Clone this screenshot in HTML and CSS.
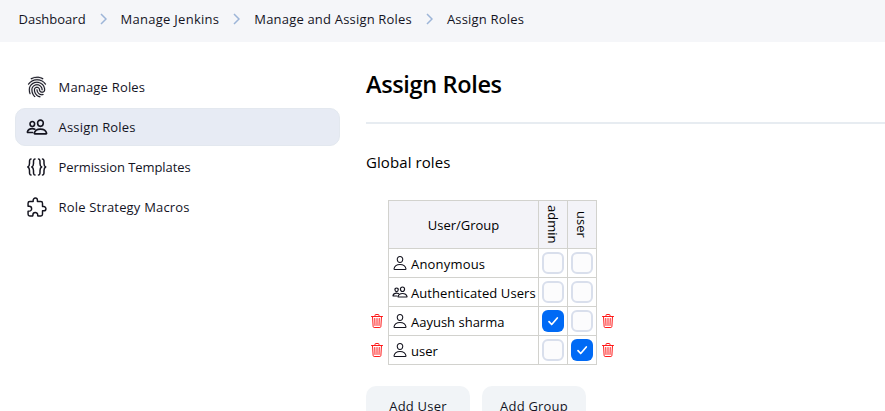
FILE: index.html
```html
<!DOCTYPE html>
<html lang="en">
<head>
<meta charset="utf-8">
<title>Assign Roles</title>
<link rel="stylesheet" href="styles.css">
</head>
<body>
<svg class="sprite" aria-hidden="true">
  <symbol id="chevron" viewBox="0 0 7 12"><path d="M1 1l5 5-5 5" fill="none" stroke="currentColor" stroke-width="1.5"/></symbol>
  <symbol id="fingerprint" viewBox="0 0 512 512"><path fill="currentColor" stroke="currentColor" stroke-width="5" d="M390.42 75.28a10.45 10.45 0 01-5.32-1.44C340.72 50.08 302.35 40 256.35 40c-45.77 0-89.23 11.28-128.76 33.84C122 77 115.11 74.8 111.87 69a12.4 12.4 0 014.63-16.32A281.81 281.81 0 01256.35 16c49.23 0 92.23 11.28 139.39 36.48a12 12 0 014.85 16.08 11.3 11.3 0 01-10.17 6.72zm-330.79 126a11.73 11.73 0 01-6.7-2.16 12.26 12.26 0 01-2.78-16.8c22.89-33.6 52-60 86.69-78.48 72.58-38.84 165.51-39.12 238.32-.24 34.68 18.48 63.8 44.64 86.69 78a12.29 12.29 0 01-2.78 16.8 11.26 11.26 0 01-16.18-2.88c-20.8-30.24-47.15-54-78.36-70.56-66.34-35.28-151.18-35.28-217.29.24-31.44 16.8-57.79 40.8-78.59 71.04a10 10 0 01-9.02 5.04zM204.1 491a10.66 10.66 0 01-8.09-3.6C175.9 466.48 165 453 149.55 424c-16-29.52-24.27-65.52-24.27-104.16 0-71.28 58.71-129.36 130.84-129.36S387 248.56 387 319.84a11.56 11.56 0 11-23.11 0c0-58.08-48.32-105.36-107.72-105.36S148.4 261.76 148.4 319.84c0 34.56 7.39 66.48 21.49 92.4 14.8 27.6 25 39.36 42.77 58.08a12.67 12.67 0 010 17 12.44 12.44 0 01-8.56 3.68zm165.75-44.4c-27.51 0-51.78-7.2-71.66-21.36a129.1 129.1 0 01-55-105.36 11.57 11.57 0 1123.12 0 104.28 104.28 0 0044.84 85.44c16.41 11.52 35.6 17 58.72 17a147.41 147.41 0 0024-2.4c6.24-1.2 12.25 3.12 13.4 9.84a11.92 11.92 0 01-9.47 13.92 152.28 152.28 0 01-27.95 2.92zM323.38 496a13 13 0 01-3-.48c-36.76-10.56-60.8-24.72-86-50.4-32.37-33.36-50.16-77.76-50.16-125.28 0-38.88 31.9-70.56 71.19-70.56s71.2 31.68 71.2 70.56c0 25.68 21.5 46.56 48.08 46.56s48.08-20.88 48.08-46.56c0-90.48-75.13-163.92-167.59-163.92-65.65 0-125.75 37.92-152.79 96.72-9 19.44-13.64 42.24-13.64 67.2 0 18.72 1.61 48.24 15.48 86.64 2.32 6.24-.69 13.2-6.7 15.36a11.34 11.34 0 01-14.79-7 276.39 276.39 0 01-16.88-95c0-28.8 5.32-55 15.72-77.76 30.75-67 98.94-110.4 173.6-110.4 105.18 0 190.71 84.24 190.71 187.92 0 38.88-32 70.56-71.2 70.56s-71.2-31.68-71.2-70.56C303.5 294.16 282 273.28 255.42 273.28S207.34 294.16 207.34 319.84c0 41.04 15.48 79.44 43.69 108.48 22.2 22.8 43.45 35.28 76.52 44.88 6.24 1.68 9.71 8.4 8.09 14.64A11.8 11.8 0 01323.38 496z"/></symbol>
  <symbol id="people" viewBox="0 0 512 512"><g fill="none" stroke="currentColor" stroke-linecap="round" stroke-linejoin="round" stroke-width="38"><path d="M402 168c-2.93 40.67-33.1 72-66 72s-63.12-31.32-66-72c-3-42.31 26.37-72 66-72s69 30.46 66 72z"/><path d="M336 304c-65.17 0-127.84 32.37-143.54 95.41-2.08 8.34 3.15 16.59 11.72 16.59h263.65c8.57 0 13.77-8.25 11.72-16.59C463.85 335.36 401.18 304 336 304z"/><path d="M200 185.94c-2.34 32.48-26.72 58.06-53 58.06s-50.7-25.57-53-58.06C91.61 152.15 115.34 128 147 128s55.39 24.77 53 57.94zM206 306c-18.05-8.27-37.93-11.45-59-11.45-52 0-102.1 25.85-114.65 76.2-1.65 6.66 2.53 13.25 9.37 13.25H154"/></g></symbol>
  <symbol id="braces" viewBox="0 0 22 22"><path fill="none" stroke="currentColor" stroke-width="1.5" stroke-linecap="round" stroke-linejoin="round" d="M5 3C3.300 3 3.500 5 3.500 7.500S3.200 10.500 1.800 11C3.200 11.500 3.500 12 3.500 14.500S3.300 19 5 19M9 3C7.300 3 7.500 5 7.500 7.500S7.200 10.500 5.800 11C7.200 11.500 7.500 12 7.500 14.500S7.300 19 9 19M12.500 3C14.200 3 14 5 14 7.500S14.300 10.500 15.700 11C14.300 11.500 14 12 14 14.500S14.200 19 12.500 19M16.500 3C18.200 3 18 5 18 7.500S18.300 10.500 19.700 11C18.300 11.500 18 12 18 14.500S18.200 19 16.500 19"/></symbol>
  <symbol id="puzzle" viewBox="0 0 512 512"><path fill="none" stroke="currentColor" stroke-linejoin="round" stroke-width="34" d="M413.66 246.1H386a2 2 0 01-2-2v-77.24A38.86 38.86 0 00345.14 128H267.9a2 2 0 01-2-2V98.34c0-27.14-21.5-49.86-48.64-50.33a49.53 49.53 0 00-50.4 49.51V126a2 2 0 01-2 2H87.62A39.74 39.74 0 0048 167.62V238a2 2 0 002 2h26.91c29.37 0 53.68 25.48 54.09 54.85.42 29.87-23.51 57.15-53.29 57.15H50a2 2 0 00-2 2v70.38A39.74 39.74 0 0087.62 464H158a2 2 0 002-2v-20.93c0-30.28 24.75-56.35 55-57.06 30.1-.7 57 20.31 57 50.28V462a2 2 0 002 2h71.14A38.86 38.86 0 00384 425.14v-78a2 2 0 012-2h28.48c27.63 0 49.52-22.67 49.52-50.4s-23.2-48.64-50.34-48.64z"/></symbol>
  <symbol id="person" viewBox="0 0 512 512"><path fill="none" stroke="currentColor" stroke-linejoin="round" stroke-width="34" d="M344 144c-3.92 52.87-44 96-88 96s-84.15-43.12-88-96c-4-55 35-96 88-96s92 42 88 96zM256 304c-87 0-175.3 48-191.64 138.6C62.39 453.52 68.57 464 80 464h352c11.44 0 17.62-10.48 15.65-21.4C431.3 352 343 304 256 304z"/></symbol>
  <symbol id="trash" viewBox="0 0 512 512"><path fill="none" stroke="currentColor" stroke-linecap="round" stroke-linejoin="round" stroke-width="32" d="M112 112l20 320c.95 18.49 14.4 32 32 32h184c17.67 0 30.87-13.51 32-32l20-320M80 112h352M192 112V72h0a23.93 23.93 0 0124-24h80a23.93 23.93 0 0124 24h0v40M256 176v224M184 176l8 224M328 176l-8 224"/></symbol>
  <symbol id="check" viewBox="0 0 22 22"><path fill="none" stroke="#fff" stroke-width="1.7" stroke-linecap="round" stroke-linejoin="round" d="M7 11.700l2.700 2.800L15.300 8"/></symbol>
</svg>

<nav class="breadcrumbs">
  <span>Dashboard</span><svg class="chevron"><use href="#chevron"/></svg>
  <span class="looser">Manage Jenkins</span><svg class="chevron"><use href="#chevron"/></svg>
  <span class="loose">Manage and Assign Roles</span><svg class="chevron"><use href="#chevron"/></svg>
  <span class="loose">Assign Roles</span>
</nav>

<div class="page">
  <aside class="tasks">
    <a class="task"><svg><use href="#fingerprint"/></svg><span class="loose">Manage Roles</span></a>
    <a class="task active"><svg><use href="#people"/></svg><span class="loose">Assign Roles</span></a>
    <a class="task"><svg><use href="#braces"/></svg><span class="tight">Permission Templates</span></a>
    <a class="task"><svg><use href="#puzzle"/></svg><span class="loose">Role Strategy Macros</span></a>
  </aside>

  <main class="content">
    <h1>Assign Roles</h1>
    <h2>Global roles</h2>
    <div class="matrix">
      <div class="row head">
        <div class="tool"></div>
        <div class="cell name">User/Group</div>
        <div class="cell role"><span>admin</span></div>
        <div class="cell role"><span>user</span></div>
        <div class="tool end"></div>
      </div>
      <div class="row">
        <div class="tool"></div>
        <div class="cell name"><svg><use href="#person"/></svg><span class="loose">Anonymous</span></div>
        <div class="cell"><i class="box"></i></div>
        <div class="cell"><i class="box"></i></div>
        <div class="tool end"></div>
      </div>
      <div class="row">
        <div class="tool"></div>
        <div class="cell name"><svg><use href="#people"/></svg><span class="slight">Authenticated Users</span></div>
        <div class="cell"><i class="box"></i></div>
        <div class="cell"><i class="box"></i></div>
        <div class="tool end"></div>
      </div>
      <div class="row">
        <div class="tool"><svg><use href="#trash"/></svg></div>
        <div class="cell name"><svg><use href="#person"/></svg><span>Aayush sharma</span></div>
        <div class="cell"><svg class="box checked"><use href="#check"/></svg></div>
        <div class="cell"><i class="box"></i></div>
        <div class="tool end"><svg><use href="#trash"/></svg></div>
      </div>
      <div class="row last">
        <div class="tool"><svg><use href="#trash"/></svg></div>
        <div class="cell name"><svg><use href="#person"/></svg><span>user</span></div>
        <div class="cell"><i class="box"></i></div>
        <div class="cell"><svg class="box checked"><use href="#check"/></svg></div>
        <div class="tool end"><svg><use href="#trash"/></svg></div>
      </div>
    </div>
    <div class="actions">
      <button>Add User</button>
      <button>Add Group</button>
    </div>
  </main>
</div>
</body>
</html>
```
FILE: styles.css
```css
* { box-sizing: border-box; }
html, body { height: 100%; }
body {
  margin: 0;
  overflow: hidden;
  background: #fff;
  color: #14141f;
  font: 13px/20px "Open Sans", "Noto Sans", sans-serif;
}
svg { display: block; flex: none; }
.sprite { position: absolute; width: 0; height: 0; }
.tight { letter-spacing: -0.08px; }
.slight { letter-spacing: 0.08px; }
.loose { letter-spacing: 0.19px; }
.looser { letter-spacing: 0.27px; }

.breadcrumbs {
  display: flex;
  align-items: center;
  height: 42px;
  padding: 0 0 4px 18.500px;
  background: #f5f6f9;
  white-space: nowrap;
}
.chevron { width: 7px; height: 12px; margin: 0 14px; color: #9db5d8; }

.page { display: flex; }
.tasks {
  display: flex;
  flex: none;
  flex-direction: column;
  gap: 2px;
  width: 325px;
  margin: 26px 26px 0 15px;
}
.task {
  display: flex;
  align-items: center;
  gap: 10.500px;
  height: 38px;
  padding-left: 11px;
  border-radius: 10px;
}
.task svg { width: 22px; height: 22px; }
.task.active { background: #e7ebf4; border: 1px solid #e3e8ef; padding-left: 10px; }

.content { flex: 1; color: #000; }
h1 {
  height: 82px;
  margin: 0;
  padding-top: 26px;
  border-bottom: 2px solid #e7ecf1;
  font-size: 23.500px;
  font-weight: 600;
  letter-spacing: -0.35px;
  line-height: 32px;
}
h2 { margin: 26px 0 0; font-size: 15px; font-weight: 400; letter-spacing: 0.08px; line-height: 24px; }

.matrix { margin-top: 26px; }
.row { display: grid; grid-template-columns: 22px 150px 29px 29px 22px; height: 29px; }
.head { height: 48px; }
.cell {
  display: flex;
  align-items: center;
  justify-content: center;
  border: solid #d2d2ce;
  border-width: 1px 0 0 1px;
}
.last { height: 30px; }
.last .cell { border-bottom-width: 1px; }
.name { justify-content: flex-start; padding: 1px 0 0 3px; white-space: nowrap; }
.name svg { width: 16px; height: 16px; margin: -1px 3px 0 0; color: #14141f; }
.head .cell { background: #f3f3f8; }
.head .name { justify-content: center; padding: 0; }
.role span { writing-mode: vertical-rl; line-height: 20px; margin-bottom: 1px; }
.tool { display: flex; align-items: center; padding-left: 3px; color: #ff1a1a; }
.tool.end { border-left: 1px solid #d2d2ce; }
.tool svg { width: 16px; height: 16px; }
.box {
  display: block;
  width: 22px;
  height: 22px;
  border: 2px solid #d9dfec;
  border-radius: 6px;
  background: #fcfcfd;
}
.box.checked { border: 0; background: #006af5; }

.actions { display: flex; gap: 12px; margin-top: 21px; }
button {
  flex: none;
  width: 104px;
  height: 38px;
  padding: 1px 0 0;
  border: 0;
  border-radius: 10px;
  background: #f1f4f7;
  color: #14141f;
  font: inherit;
  letter-spacing: 0.2px;
}
```
